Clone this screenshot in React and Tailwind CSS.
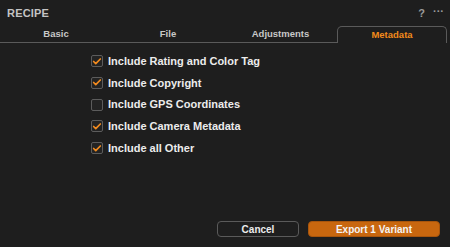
import { Check } from 'lucide-react'

const options = [
  { label: 'Include Rating and Color Tag', checked: true },
  { label: 'Include Copyright', checked: true },
  { label: 'Include GPS Coordinates', checked: false },
  { label: 'Include Camera Metadata', checked: true },
  { label: 'Include all Other', checked: true },
]

const tabs = ['Basic', 'File', 'Adjustments', 'Metadata']

export default function App() {
  return (
    <div
      className="w-[450px] h-[247px] bg-[#1e1e1e] text-[#d6d6d6] flex flex-col overflow-hidden"
      style={{ fontFamily: '"Liberation Sans", Arial, sans-serif' }}
    >
      {/* Header */}
      <div className="h-[26px] flex items-center justify-between pl-[7px] pr-[6px]">
        <span className="text-[11px] font-bold text-[#c4c4c4] tracking-[0.2px]">RECIPE</span>
        <div className="flex items-center gap-[8px] text-[#9a9a9a]">
          <span className="text-[11px] font-bold">?</span>
          <span className="text-[11px] font-bold leading-none -mt-[4px]">···</span>
        </div>
      </div>

      {/* Tabs */}
      <div className="flex h-[17px] pr-[3px]">
        {tabs.map(t =>
          t === 'Metadata' ? (
            <div
              key={t}
              className="w-[110px] border border-b-0 border-[#5a5a5a] rounded-t-[5px] flex items-center justify-center text-[9.5px] font-bold text-[#f28a1c]"
            >
              {t}
            </div>
          ) : (
            <div
              key={t}
              className={`${t === 'Adjustments' ? 'w-[113px]' : 'w-[112px]'} border-b border-[#5a5a5a] flex items-center justify-center text-[9.5px] font-bold text-[#c8c8c8]`}
            >
              {t}
            </div>
          )
        )}
      </div>

      {/* Options */}
      <div className="flex flex-col gap-[9.75px] pl-[91px] pt-[12px]">
        {options.map(o => (
          <div key={o.label} className="flex items-center gap-[5px] h-[12px]">
            <div className="w-[12px] h-[12px] rounded-[2px] border border-[#5c5c5c] bg-[#232323] flex items-center justify-center">
              {o.checked && <Check size={11} strokeWidth={4} className="text-[#f38b1f]" />}
            </div>
            <span className="text-[11px] font-bold text-[#ececec]">{o.label}</span>
          </div>
        ))}
      </div>

      {/* Footer */}
      <div className="mt-auto mb-[10px] flex justify-end gap-[9px] pr-[10px]">
        <button className="w-[82px] h-[16px] rounded-[4px] border border-[#5a5a5a] text-[10px] font-bold text-[#ececec] flex items-center justify-center">
          Cancel
        </button>
        <button className="w-[132px] h-[16px] rounded-[4px] border border-[#a8550c] bg-[#c8670f] text-[10px] font-bold text-[#f4f4f4] flex items-center justify-center">
          Export 1 Variant
        </button>
      </div>
    </div>
  )
}
